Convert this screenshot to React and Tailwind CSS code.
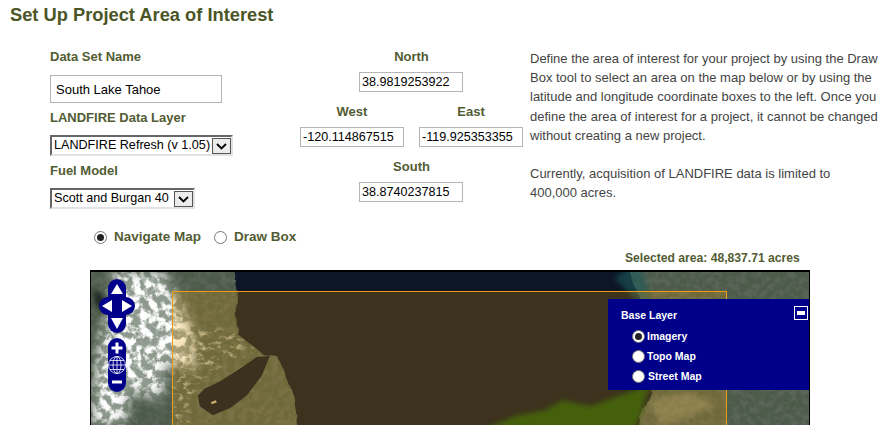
const FONT = "font-['Liberation_Sans',Arial,sans-serif]";

function Label({ children, className = "" }) {
  return <div className={`h-[16px] pt-[1px] box-border text-[13px] leading-[16px] font-bold text-[#525c33] ${className}`}>{children}</div>;
}

function CoordInput({ value }) {
  return (
    <input
      readOnly
      value={value}
      className="block w-[104px] h-[20px] border border-[#b5b5b5] px-[2px] text-[12.6px] text-black bg-white outline-none"
    />
  );
}

function Select({ value, width }) {
  return (
    <div className={`relative h-[21px] ${width}`}>
      <select
        value={value}
        onChange={() => {}}
        className="block appearance-none w-full h-full bg-white border-2 border-t-[#666] border-l-[#666] border-r-[#e2e2e2] border-b-[#e2e2e2] pl-[2px] pr-[14px] text-[12.6px] leading-[17px] text-black outline-none"
      >
        <option>{value}</option>
      </select>
      <div className="absolute right-[2px] top-[3px] w-[19px] h-[16px] border border-[#555] bg-[#ececec] flex items-center justify-center">
        <svg width="11" height="7" viewBox="0 0 11 7">
          <path d="M1 1 L5.5 5.5 L10 1" fill="none" stroke="#000" strokeWidth="1.8" />
        </svg>
      </div>
    </div>
  );
}

function Radio({ checked }) {
  return (
    <span className="mt-[3px] w-[13px] h-[13px] rounded-full border border-[#777] bg-white flex items-center justify-center shrink-0">
      {checked && <span className="w-[7px] h-[7px] rounded-full bg-[#222]" />}
    </span>
  );
}

function LayerOption({ label, checked, gap }) {
  return (
    <div className={`flex items-center h-[20px] ${gap}`}>
      <span className="w-[13px] h-[13px] rounded-full bg-white border border-[#777] flex items-center justify-center shrink-0">
        {checked && <span className="w-[7px] h-[7px] rounded-full bg-[#222]" />}
      </span>
      <span className="text-[10.5px] font-bold text-white leading-[12px]">{label}</span>
    </div>
  );
}

const SMALL_LAKE = "M107 125 L109 136 L122 145 L139 138 L156 125 L171 105 L179 85 L166 86 L149 98 L129 111 L114 118 Z";

function Imagery() {
  return (
    <svg className="block w-full h-full" viewBox="0 0 719 155" preserveAspectRatio="none">
      <defs>
        <filter id="snow" x="0" y="0" width="100%" height="100%">
          <feTurbulence type="fractalNoise" baseFrequency="0.12" numOctaves="4" seed="5" />
          <feColorMatrix values="0 0 0 0 1  0 0 0 0 1  0 0 0 0 1  5 0 0 0 -2.05" />
        </filter>
        <filter id="dark" x="0" y="0" width="100%" height="100%">
          <feTurbulence type="fractalNoise" baseFrequency="0.16" numOctaves="4" seed="11" />
          <feColorMatrix values="0 0 0 0 0.1  0 0 0 0 0.13  0 0 0 0 0.1  4 0 0 0 -1.7" />
        </filter>
        <filter id="light" x="0" y="0" width="100%" height="100%">
          <feTurbulence type="fractalNoise" baseFrequency="0.13 0.2" numOctaves="4" seed="8" />
          <feColorMatrix values="0 0 0 0 0.82  0 0 0 0 0.8  0 0 0 0 0.62  4 0 0 0 -2.1" />
        </filter>
        <filter id="rough" x="-5%" y="-5%" width="110%" height="110%">
          <feTurbulence type="fractalNoise" baseFrequency="0.06" numOctaves="3" seed="2" result="n" />
          <feDisplacementMap in="SourceGraphic" in2="n" scale="7" />
          <feGaussianBlur stdDeviation="0.5" />
        </filter>
        <filter id="soft"><feGaussianBlur stdDeviation="6" /></filter>
        <filter id="soft2"><feGaussianBlur stdDeviation="2.5" /></filter>
        <mask id="snowMask">
          <path d="M22 0 H72 L88 30 L100 55 L104 100 L76 92 L70 130 L40 120 L34 155 H0 L8 70 L20 30 Z" fill="#fff" filter="url(#soft)" />
        </mask>
        <mask id="lightMask">
          <path d="M84 55 H120 L142 62 L165 80 L120 100 L100 125 L98 155 H82 Z" fill="#fff" filter="url(#soft2)" />
        </mask>
      </defs>
      <rect width="719" height="155" fill="#4d5c4a" />
      <rect width="719" height="155" filter="url(#dark)" />
      <g mask="url(#snowMask)">
        <rect width="180" height="155" fill="#a9b3aa" opacity="0.7" />
        <rect width="180" height="155" filter="url(#snow)" />
      </g>
      <path d="M2 19 L10 21 L19 36 L24 44 L12 42 L4 32 Z" fill="#161c1a" filter="url(#soft2)" opacity="0.85" />
      <g mask="url(#lightMask)" opacity="0.6">
        <rect x="80" width="110" height="155" filter="url(#light)" />
      </g>
      {/* main lake */}
      <path
        d="M143 -6 L147 22 L147 63 L172 83 L186 85 L198 112 L203 127 L208 160 L545 160 L560 120 L566 60 L550 28 L537 -6 Z"
        fill="#0a1426"
        filter="url(#rough)"
      />
      {/* shallows at the south shore */}
      <path d="M392 160 L425 146 L455 140 L472 130 L500 136 L560 114 L545 160 Z" fill="#134f10" filter="url(#soft2)" />
      <path d="M524 6 L538 -4 L552 -4 L560 30 L548 30 Z" fill="#1b5a5a" opacity="0.6" filter="url(#soft2)" />
      {/* Fallen Leaf Lake */}
      <path d={SMALL_LAKE} fill="#0a1426" />
      <path d="M120 132 l5 -2 l1 2 l-5 2 Z" fill="#c8b88a" />
      <path d="M560 130 L600 122 L625 135 L590 150 L570 155 Z" fill="#b0ab88" opacity="0.35" filter="url(#soft2)" />
    </svg>
  );
}

function PanZoom() {
  return (
    <svg width="38" height="114" viewBox="0 0 38 114" className="block">
      <rect x="9" y="0" width="18" height="54" rx="9" fill="#00008b" />
      <rect x="0" y="18" width="36" height="18" rx="9" fill="#00008b" />
      <path d="M18 5 L24 15 H12 Z M3 27 L13 21 V33 Z M33 27 L23 21 V33 Z M18 50 L12 39 H24 Z" fill="#fff" />
      <rect x="9" y="59" width="18" height="54" rx="9" fill="#00008b" />
      <path d="M12.5 69 H23.5 M18 63.5 V74.5 M13 103 H23" stroke="#fff" strokeWidth="3" />
      <g fill="none" stroke="#fff" strokeWidth="0.8">
        <circle cx="18" cy="86" r="8.5" />
        <ellipse cx="18" cy="86" rx="4" ry="8.5" />
        <path d="M18 77.5 V94.5 M9.5 86 H26.5 M11 81.5 H25 M11 90.5 H25" />
      </g>
    </svg>
  );
}

export default function App() {
  return (
    <div className={`${FONT} w-[893px] h-[425px] overflow-hidden bg-white relative`}>
      <h1 className="pl-[10px] pt-[4px] text-[18.3px] leading-[21px] font-bold text-[#4b5526]">
        Set Up Project Area of Interest
      </h1>

      <div className="flex pl-[50px] mt-[23px]">
        <div className="w-[250px] shrink-0">
          <Label>Data Set Name</Label>
          <input
            readOnly
            value="South Lake Tahoe"
            className="block mt-[11px] w-[172px] h-[28px] border border-[#b5b5b5] px-[5px] text-[13px] text-black bg-white outline-none"
          />
          <Label className="mt-[6px]">LANDFIRE Data Layer</Label>
          <div className="mt-[10px]"><Select value="LANDFIRE Refresh (v 1.05)" width="w-[183px]" /></div>
          <Label className="mt-[6px]">Fuel Model</Label>
          <div className="mt-[10px]"><Select value="Scott and Burgan 40" width="w-[145px]" /></div>
        </div>

        <div className="w-[223px] shrink-0 flex flex-col items-center">
          <Label>North</Label>
          <div className="mt-[8px] pr-[1px]"><CoordInput value="38.9819253922" /></div>
          <div className="mt-[11px] flex gap-[15px]">
            <div className="flex flex-col items-center">
              <Label>West</Label>
              <div className="mt-[8px]"><CoordInput value="-120.114867515" /></div>
            </div>
            <div className="flex flex-col items-center">
              <Label>East</Label>
              <div className="mt-[8px]"><CoordInput value="-119.925353355" /></div>
            </div>
          </div>
          <Label className="mt-[11px]">South</Label>
          <div className="mt-[8px] pr-[1px]"><CoordInput value="38.8740237815" /></div>
        </div>

        <div className="ml-[7px] pt-[1px] text-[13px] leading-[19.2px] text-[#444] whitespace-nowrap">
          <p>
            Define the area of interest for your project by using the Draw<br />
            Box tool to select an area on the map below or by using the<br />
            latitude and longitude coordinate boxes to the left. Once you<br />
            define the area of interest for a project, it cannot be changed<br />
            without creating a new project.
          </p>
          <p className="mt-[19px]">
            Currently, acquisition of LANDFIRE data is limited to<br />
            400,000 acres.
          </p>
        </div>
      </div>

      <div className="flex items-start pl-[94px] mt-[19px] h-[20px]">
        <Radio checked />
        <span className="ml-[7px] text-[13.5px] leading-[18px] font-bold text-[#525c33]">Navigate Map</span>
        <span className="ml-[13px]"><Radio /></span>
        <span className="ml-[7px] text-[13.5px] leading-[18px] font-bold text-[#525c33]">Draw Box</span>
      </div>

      <div className="pl-[625px] mt-[2px] text-[12.15px] leading-[16px] font-bold text-[#525c33]">
        Selected area: 48,837.71 acres
      </div>

      <div className="ml-[90px] mt-[4px] w-[720px] h-[155px] relative overflow-hidden border-t-2 border-l border-r border-black">
        <Imagery />
        <div className="absolute left-[81px] top-[19px] w-[555px] h-[200px] border border-[#eb9c14] bg-[#ffa500]/20" />
        <div className="absolute left-[8px] top-[7px]"><PanZoom /></div>
        <div className="absolute left-[517px] top-[27px] w-[202px] h-[91px] bg-[#00008b] pl-[13px] pt-[10px]">
          <div className="absolute right-[2px] top-[7px] w-[14px] h-[14px] border border-white flex items-center justify-center">
            <span className="w-[8px] h-[4px] bg-white" />
          </div>
          <div className="text-[10.5px] leading-[12px] font-bold text-white">Base Layer</div>
          <div className="mt-[5px] pl-[11px]">
            <LayerOption label="Imagery" checked gap="gap-[2px]" />
            <LayerOption label="Topo Map" gap="gap-[2px]" />
            <LayerOption label="Street Map" gap="gap-[3px]" />
          </div>
        </div>
      </div>
    </div>
  );
}
